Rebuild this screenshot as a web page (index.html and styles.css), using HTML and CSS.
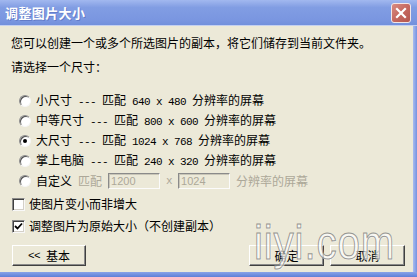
FILE: index.html
```html
<!DOCTYPE html>
<html>
<head>
<meta charset="utf-8">
<link rel="stylesheet" href="styles.css">
</head>
<body>
<div class="window">
  <div class="titlebar">
    <span class="title">调整图片大小</span>
    <span class="close"><svg width="12" height="12" viewBox="0 0 12 12"><path d="M2 2 L10 10 M10 2 L2 10" stroke="#fff" stroke-width="2.2" stroke-linecap="square"/></svg></span>
  </div>
  <div class="frame">
    <div class="body">
      <p class="intro">您可以创建一个或多个所选图片的副本，将它们储存到当前文件夹。</p>
      <p class="prompt">请选择一个尺寸：</p>
      <ul class="options">
        <li class="opt"><span class="radio"></span><span class="label">小尺寸<span class="a"> --- </span>匹配<span class="a"> 640 x 480 </span>分辨率的屏幕</span></li>
        <li class="opt"><span class="radio"></span><span class="label">中等尺寸<span class="a"> --- </span>匹配<span class="a"> 800 x 600 </span>分辨率的屏幕</span></li>
        <li class="opt"><span class="radio checked"></span><span class="label">大尺寸<span class="a"> --- </span>匹配<span class="a"> 1024 x 768 </span>分辨率的屏幕</span></li>
        <li class="opt"><span class="radio"></span><span class="label">掌上电脑<span class="a"> --- </span>匹配<span class="a"> 240 x 320 </span>分辨率的屏幕</span></li>
        <li class="opt"><span class="radio"></span><span class="label custom">自定义<span class="a"> </span><span class="dim">匹配</span><span class="a"> </span><span class="field">1200</span><span class="a dim"> x </span><span class="field">1024</span><span class="a"> </span><span class="dim">分辨率的屏幕</span></span></li>
      </ul>
      <div class="checks">
        <div class="chk"><span class="box"></span><span>使图片变小而非增大</span></div>
        <div class="chk"><span class="box"><svg width="9" height="9" viewBox="0 0 9 9"><path d="M1 4 L3.5 6.5 L8 1.5" fill="none" stroke="#000" stroke-width="1.8"/></svg></span><span>调整图片为原始大小（不创建副本）</span></div>
      </div>
      <div class="buttons">
        <span class="btn basic"><span class="a">&lt;&lt; </span>基本</span>
        <span class="spacer"></span>
        <span class="btn">确定</span>
        <span class="btn">取消</span>
      </div>
    </div>
    <div class="rborder"></div>
  </div>
  <div class="bborder"></div>
  <div class="watermark">iiyi.com</div>
</div>
</body>
</html>
```
FILE: styles.css
```css
* { box-sizing: border-box; }
html, body { margin: 0; padding: 0; }
body {
  width: 417px; height: 277px; overflow: hidden;
  background: #ece9d8;
  font-family: "Noto Sans CJK SC", sans-serif;
  font-size: 12px; line-height: 16px; color: #000;
}
p, ul { margin: 0; padding: 0; list-style: none; }
.window { position: relative; width: 417px; height: 277px; display: flex; flex-direction: column; }
.titlebar {
  height: 26px; flex: none;
  display: flex; align-items: center; justify-content: space-between;
  padding: 0 6px 0 5px;
  background: linear-gradient(#a2b8ef, #819de3 30%, #7a96e0 80%, #7290dc);
  border-bottom: 1px solid #c4d0f0;
}
.title {
  color: #fff; font-weight: bold; font-size: 13px; letter-spacing: 0.4px;
  text-shadow: 1px 1px 0 rgba(70, 90, 170, 0.45);
}
.close {
  width: 20px; height: 20px;
  border: 1px solid #f3e6e6; border-radius: 3px;
  background: linear-gradient(135deg, #d98c82, #c4665d 55%, #b4574f);
  display: flex; align-items: center; justify-content: center;
}
.frame { flex: 1; display: flex; }
.body { flex: 1; padding: 9px 8px 0 11px; display: flex; flex-direction: column; }
.rborder { width: 4px; background: linear-gradient(90deg, #a9bbef, #7693e0); }
.bborder { height: 5px; flex: none; background: linear-gradient(#8aa3e8, #5f7fd8); }
.a {
  font-family: "Liberation Mono", monospace; font-size: 11px;
  letter-spacing: -0.6px; white-space: pre;
}
.dim { color: #aca899; }
.prompt { margin-top: 8px; }
.options { margin-top: 16px; }
.opt { display: flex; align-items: center; height: 20px; padding-left: 8px; }
.radio {
  position: relative; flex: none;
  width: 12px; height: 12px; margin-right: 5px; border-radius: 50%;
  border: 1px solid; border-color: #8c8c8c #f6f6f6 #f6f6f6 #8c8c8c;
  background: #fff;
  box-shadow: inset 1px 1px 0 #505050;
}
.radio.checked::after {
  content: ""; position: absolute; left: 3px; top: 3px;
  width: 4px; height: 4px; border-radius: 50%; background: #000;
}
.label { white-space: nowrap; }
.custom { display: flex; align-items: center; }
.field {
  width: 52px; height: 16px; padding: 0 2px;
  border: 1px solid; border-color: #8a8a8a #fbfbfb #fbfbfb #8a8a8a;
  box-shadow: inset 1px 1px 0 #c9c6b8;
  font-family: "Liberation Sans", sans-serif; font-size: 11px; line-height: 14px;
  color: #aca899;
}
.checks { margin-top: 2px; }
.chk { display: flex; align-items: center; height: 22px; padding-left: 1px; }
.box {
  flex: none; width: 13px; height: 13px; margin-right: 4px;
  border: 1px solid; border-color: #8a8a8a #f8f8f8 #f8f8f8 #8a8a8a;
  box-shadow: inset 1px 1px 0 #404040, inset -1px -1px 0 #d4d0c8;
  background: #fff;
  display: flex; align-items: center; justify-content: center;
}
.buttons { margin-top: 8px; display: flex; height: 21px; padding-left: 1px; }
.btn {
  width: 75px; height: 21px;
  display: flex; align-items: center; justify-content: center;
  border: 1px solid; border-color: #fff #404040 #404040 #fff;
  box-shadow: inset -1px -1px 0 #8a8a8a;
  background: #ece9d8;
}
.btn.basic { width: 74px; }
.btn + .btn { margin-left: 6px; }
.spacer { flex: 1; }
.watermark {
  position: absolute; left: 254px; top: 219px;
  font-family: "Liberation Sans", sans-serif; font-size: 48px; line-height: 48px;
  letter-spacing: 1px;
  color: rgba(255, 255, 255, 0.3);
  -webkit-text-stroke: 1px rgba(125, 125, 125, 0.8);
  text-shadow: 1px 1px 0 rgba(255, 255, 255, 0.6);
  transform: scaleX(0.84); transform-origin: left top;
  pointer-events: none;
}
```
